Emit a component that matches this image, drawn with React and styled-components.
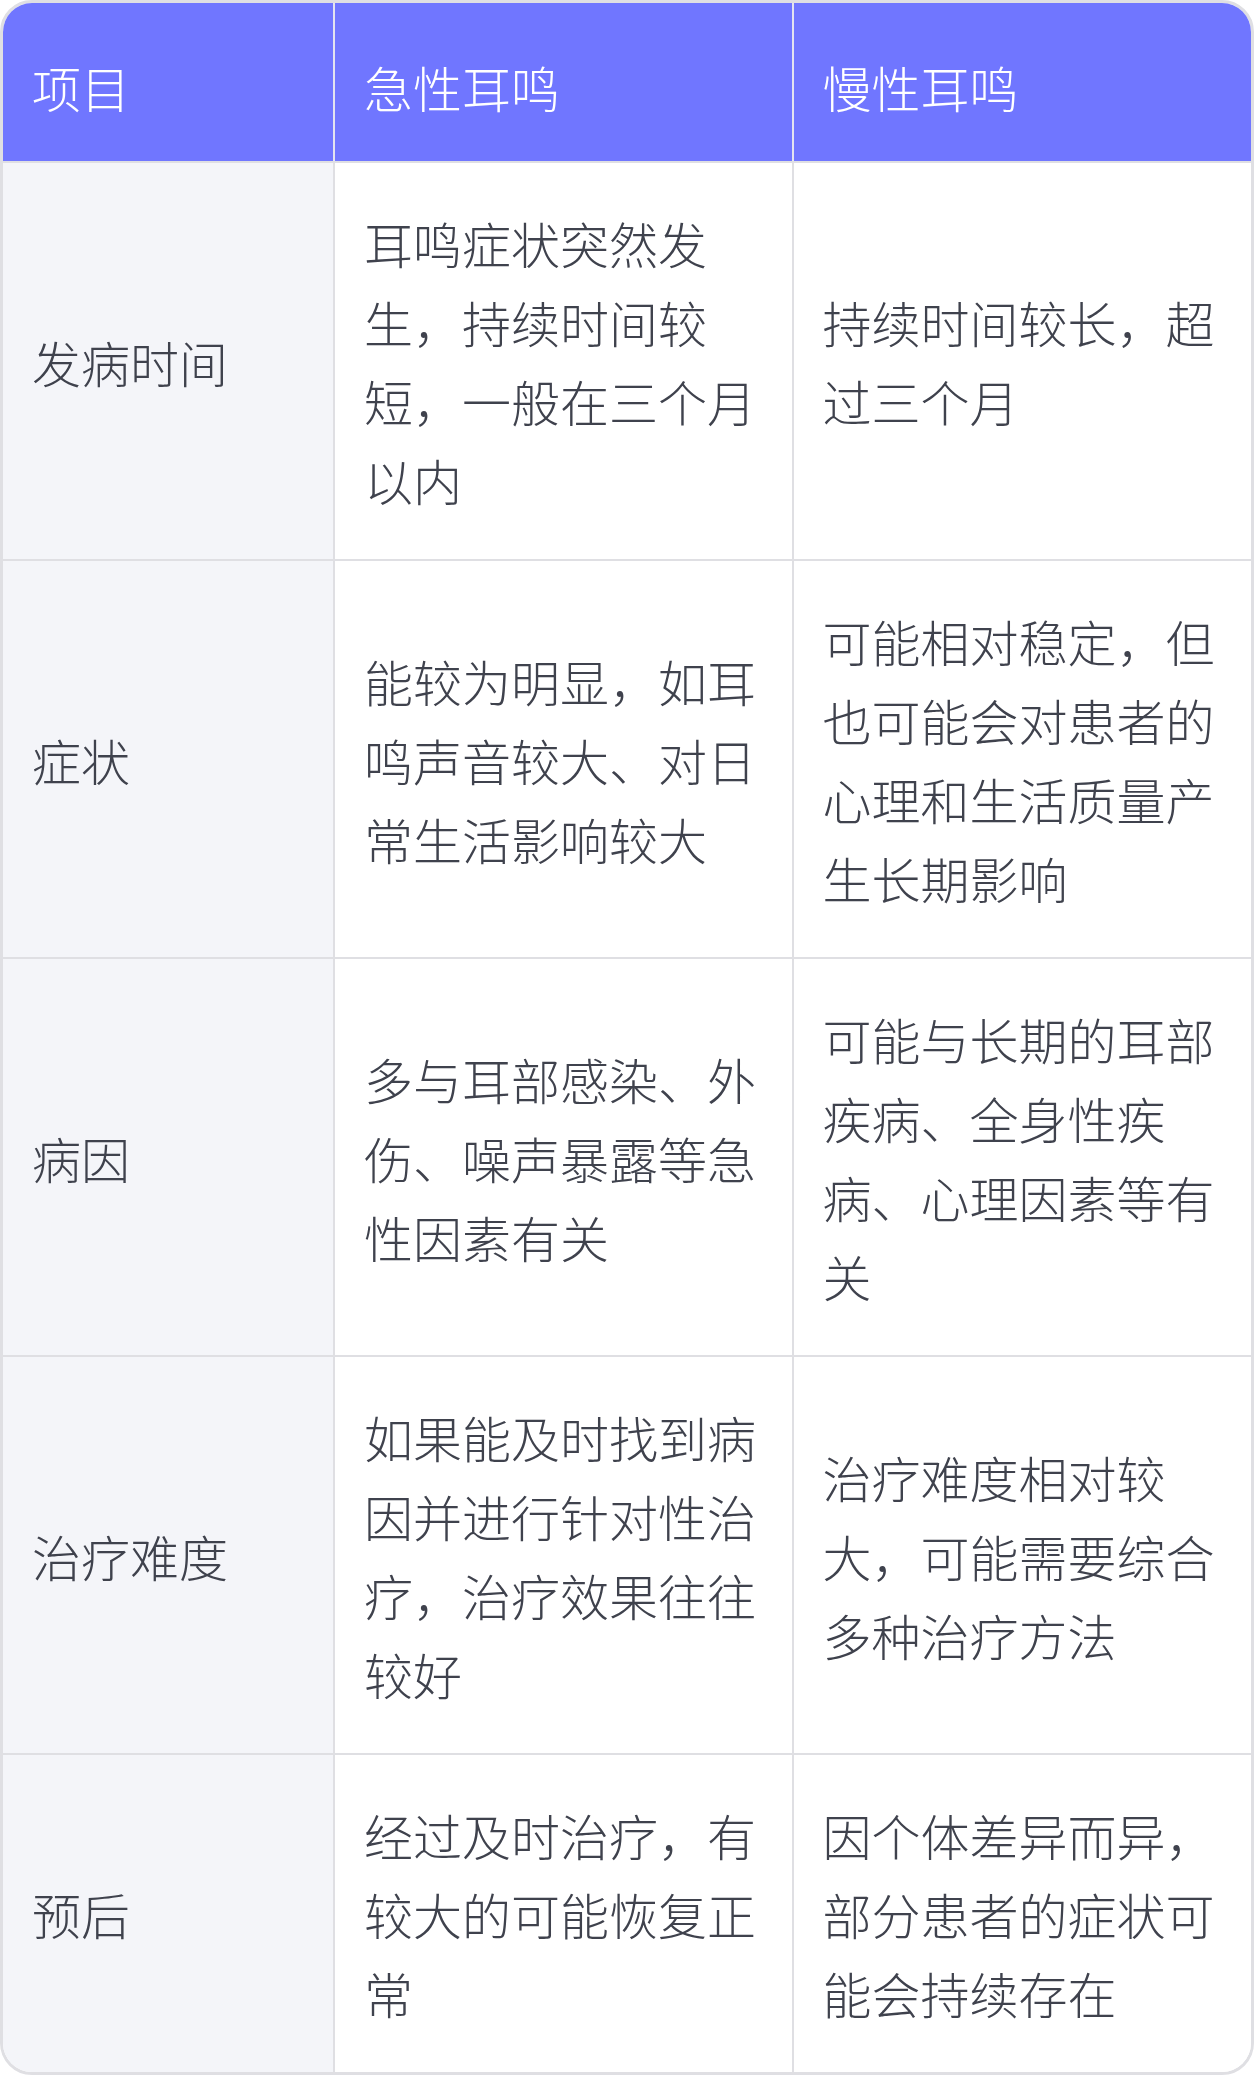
import React from "react";
import styled, { createGlobalStyle } from "styled-components";

const GlobalStyle = createGlobalStyle`
  html, body {
    margin: 0;
    padding: 0;
    background: #ffffff;
  }
  body {
    font-family: "Noto Sans CJK SC", "Noto Sans", sans-serif;
  }
`;

const Frame = styled.div`
  width: 1254px;
  box-sizing: border-box;
  border: 3px solid #dfdfe3;
  border-radius: 32px;
  overflow: hidden;
  background: #ffffff;
`;

const Table = styled.table`
  width: 100%;
  border-collapse: collapse;
  table-layout: fixed;
`;

const HeadCell = styled.th`
  background: #7076ff;
  color: #ffffff;
  font-size: 49px;
  font-weight: 300;
  line-height: 79px;
  text-align: left;
  padding: 44px 29px 35px;
  border-left: 2px solid #e3e4f0;
  border-bottom: 2px solid #dfdfe3;
  &:first-child {
    border-left: none;
  }
`;

const Cell = styled.td`
  background: ${(p) => (p.$label ? "#f4f5f9" : "#ffffff")};
  color: #3f424d;
  font-size: 49px;
  font-weight: 300;
  line-height: 79px;
  padding: 40px 29px;
  vertical-align: middle;
  border-left: 2px solid #dfdfe3;
  border-top: 2px solid #dfdfe3;
  &:first-child {
    border-left: none;
  }
`;

const Row = styled.tr`
  &:first-child td {
    border-top: none;
  }
`;

const rows = [
  {
    name: "发病时间",
    acute: "耳鸣症状突然发生，持续时间较短，一般在三个月以内",
    chronic: "持续时间较长，超过三个月",
  },
  {
    name: "症状",
    acute: "能较为明显，如耳鸣声音较大、对日常生活影响较大",
    chronic: "可能相对稳定，但也可能会对患者的心理和生活质量产生长期影响",
  },
  {
    name: "病因",
    acute: "多与耳部感染、外伤、噪声暴露等急性因素有关",
    chronic: "可能与长期的耳部疾病、全身性疾病、心理因素等有关",
  },
  {
    name: "治疗难度",
    acute: "如果能及时找到病因并进行针对性治疗，治疗效果往往较好",
    chronic: "治疗难度相对较大，可能需要综合多种治疗方法",
  },
  {
    name: "预后",
    acute: "经过及时治疗，有较大的可能恢复正常",
    chronic: "因个体差异而异，部分患者的症状可能会持续存在",
  },
];

const App = () => {
  return (
    <>
      <GlobalStyle />
      <Frame>
        <Table>
          <colgroup>
            <col style={{ width: "331px" }} />
            <col />
            <col />
          </colgroup>
          <thead>
            <tr>
              <HeadCell>项目</HeadCell>
              <HeadCell>急性耳鸣</HeadCell>
              <HeadCell>慢性耳鸣</HeadCell>
            </tr>
          </thead>
          <tbody>
            {rows.map((r) => (
              <Row key={r.name}>
                <Cell $label>{r.name}</Cell>
                <Cell>{r.acute}</Cell>
                <Cell>{r.chronic}</Cell>
              </Row>
            ))}
          </tbody>
        </Table>
      </Frame>
    </>
  );
};

export default App;
